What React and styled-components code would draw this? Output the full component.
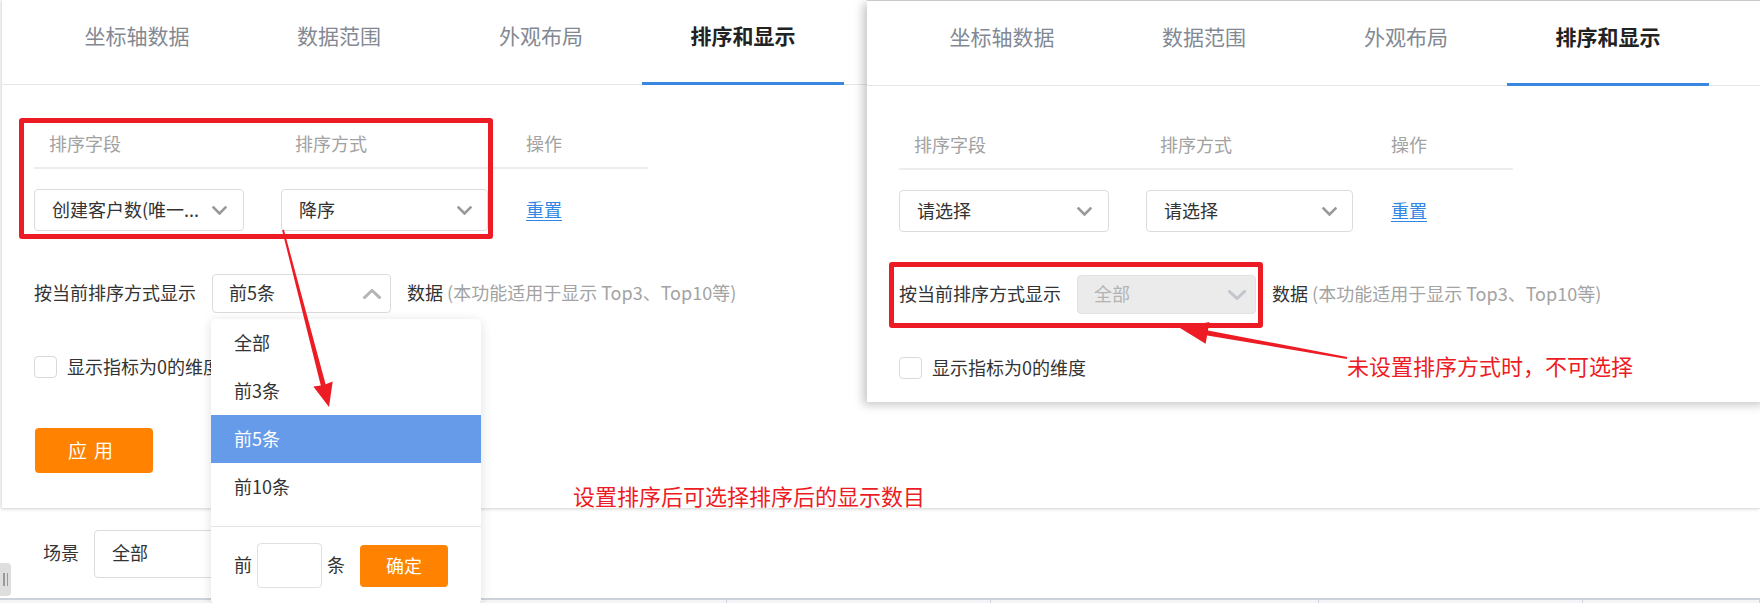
import React from 'react';
import styled, { createGlobalStyle, css } from 'styled-components';

const FONT = `"Noto Sans CJK SC", "Noto Sans", "Liberation Sans", sans-serif`;
const RED = '#ed1c24';
const ORANGE = '#ff8200';

const GlobalStyle = createGlobalStyle`
  html, body { margin: 0; padding: 0; background: #fff; }
  body { font-family: ${FONT}; width: 1760px; height: 603px; overflow: hidden; }
  * { box-sizing: border-box; }
`;

const Page = styled.div`
  position: relative;
  width: 1760px;
  height: 603px;
  overflow: hidden;
  background: #fff;
  display: flex;
  flex-direction: column;
`;

const ConfigPanel = styled.section`
  position: relative;
  z-index: 2;
  flex: 0 0 509px;
  margin-left: 2px;
  background: #fff;
  border-bottom: 1px solid #e3e3e3;
  box-shadow: -2px 0 3px rgba(0, 0, 0, 0.1), 0 1px 3px rgba(0, 0, 0, 0.06);
`;

const Snapshot = styled.section`
  position: absolute;
  z-index: 3;
  left: 867px;
  top: 0;
  width: 900px;
  height: 402px;
  overflow: hidden;
  background: #fff;
  border-top: 1px solid #c9c9c9;
  box-shadow: -4px 3px 9px rgba(0, 0, 0, 0.22);
`;

const TabBar = styled.div`
  display: flex;
  height: 85px;
  padding-left: 34px;
  border-bottom: 1px solid #e6e6e6;
`;

const Tab = styled.div`
  width: 202px;
  height: 85px;
  margin-bottom: -1px;
  display: flex;
  justify-content: center;
  padding-top: 19px;
  font-size: 21px;
  line-height: 32px;
  color: ${(p) => (p.$active ? '#222' : '#838993')};
  font-weight: ${(p) => (p.$active ? 700 : 400)};
  ${(p) =>
    p.$active &&
    css`
      box-shadow: inset 0 -3px 0 #3a87e1;
    `}
`;

const Content = styled.div`
  padding: 37px 0 0 32px;
  display: flex;
  flex-direction: column;
  align-items: flex-start;
`;

const Grid = styled.div`
  display: grid;
  grid-template-columns: 246px 231px 137px;
  width: 614px;
  align-items: center;
`;

const HeadRow = styled(Grid)`
  height: 47px;
  border-bottom: 2px solid #ededed;
`;

const HeadCell = styled.div`
  padding: 0 0 4px 15px;
  font-size: 18px;
  color: #a2a2a2;
`;

const BodyRow = styled(Grid)`
  margin-top: 20px;
  height: 42px;
`;

const Cell = styled.div`
  display: flex;
  align-items: center;
  padding-left: ${(p) => p.$pl || 0}px;
`;

const SelectBox = styled.div`
  display: flex;
  align-items: center;
  justify-content: space-between;
  width: ${(p) => p.$w}px;
  height: ${(p) => p.$h}px;
  padding: 0 ${(p) => p.$pr}px 0 ${(p) => p.$pl}px;
  border: 1px solid ${(p) => (p.$disabled ? '#e2e2e2' : '#dcdcdc')};
  border-radius: 4px;
  background: ${(p) => (p.$disabled ? '#ebebeb' : '#fff')};
  color: ${(p) => (p.$disabled ? '#b3b3b3' : '#333')};
  font-size: 18px;
  white-space: nowrap;
`;

const SelectText = styled.span`
  padding-bottom: 3px;
`;

const Link = styled.a`
  padding-bottom: 3px;
  font-size: 18px;
  color: #2f86e4;
  text-decoration: underline;
  text-underline-offset: 3px;
`;

const DisplayRow = styled.div`
  margin-top: 43px;
  display: flex;
  align-items: center;
  height: 39px;
  font-size: 18px;
  color: #333;
`;

const Label = styled.span`
  padding-bottom: 3px;
  font-size: 18px;
  color: #333;
  white-space: nowrap;
`;

const Hint = styled.span`
  color: #a3a3a3;
`;

const SelectAnchor = styled.div`
  position: relative;
  margin: 0 16px;
`;

const CheckRow = styled.label`
  margin-top: 43px;
  display: flex;
  align-items: center;
  gap: 10px;
  height: 22px;
`;

const CheckBox = styled.span`
  width: 23px;
  height: 22px;
  border: 1px solid #d9d9d9;
  border-radius: 4px;
  background: #fff;
`;

const OrangeButton = styled.button`
  width: ${(p) => p.$w}px;
  height: ${(p) => p.$h}px;
  margin-top: ${(p) => p.$mt || 0}px;
  margin-left: ${(p) => p.$ml || 0}px;
  border: none;
  border-radius: 4px;
  background: ${ORANGE};
  color: #fff;
  font-family: ${FONT};
  font-size: ${(p) => p.$fs || 18}px;
  letter-spacing: ${(p) => p.$ls || 0}px;
  padding: 0 0 2px;
`;

const Menu = styled.div`
  position: absolute;
  top: calc(100% + 6px);
  left: -1px;
  width: 270px;
  background: #fff;
  border-radius: 5px;
  box-shadow: 0 2px 12px rgba(0, 0, 0, 0.13);
  z-index: 5;
`;

const MenuList = styled.ul`
  list-style: none;
  margin: 0;
  padding: 0 0 15px;
`;

const MenuItem = styled.li`
  height: 48px;
  display: flex;
  align-items: center;
  padding: 0 0 3px 23px;
  font-size: 18px;
  color: ${(p) => (p.$active ? '#fff' : '#333')};
  background: ${(p) => (p.$active ? '#659be9' : 'transparent')};
`;

const MenuFooter = styled.div`
  border-top: 1px solid #e4e4e4;
  display: flex;
  align-items: center;
  gap: 5px;
  padding: 16px 0 16px 23px;
`;

const SmallInput = styled.span`
  width: 65px;
  height: 45px;
  border: 1px solid #e0e0e0;
  border-radius: 4px;
`;

const FilterBar = styled.div`
  flex: 0 0 89px;
  display: flex;
  align-items: center;
  gap: 15px;
  padding-left: 43px;
`;

const BottomStrip = styled.div`
  flex: 1;
  display: grid;
  grid-template-columns: 462px 265px 264px 328px 264px 1fr;
  border-top: 2px solid #cdd1d9;
  background: #f4f5f7;
`;

const StripCell = styled.div`
  border-right: 1px solid #d3d6dc;
`;

const Handle = styled.div`
  position: absolute;
  left: 0;
  top: 563px;
  width: 11px;
  height: 33px;
  background: #dedede;
  border-radius: 0 4px 4px 0;
  display: flex;
  justify-content: center;
  align-items: center;
  gap: 2px;
  z-index: 1;
  &::before,
  &::after {
    content: '';
    width: 1.5px;
    height: 13px;
    background: #9a9a9a;
  }
`;

const RedBox = styled.div`
  position: absolute;
  left: ${(p) => p.$x}px;
  top: ${(p) => p.$y}px;
  width: ${(p) => p.$w}px;
  height: ${(p) => p.$h}px;
  border: 5px solid ${RED};
  border-radius: 3px;
  z-index: 6;
`;

const RedNote = styled.div`
  position: absolute;
  left: ${(p) => p.$x}px;
  top: ${(p) => p.$y}px;
  font-size: 22px;
  line-height: 30px;
  color: ${RED};
  white-space: nowrap;
  z-index: 6;
`;

const ArrowLayer = styled.svg`
  position: absolute;
  left: 0;
  top: 0;
  z-index: 6;
  pointer-events: none;
`;

function Chevron({ up = false, w = 15, h = 9, color = '#999', sw = 2.6 }) {
  const pts = up
    ? `1.5,${h - 1.5} ${w / 2},1.5 ${w - 1.5},${h - 1.5}`
    : `1.5,1.5 ${w / 2},${h - 1.5} ${w - 1.5},1.5`;
  return (
    <svg width={w} height={h} viewBox={`0 0 ${w} ${h}`}>
      <polyline points={pts} fill="none" stroke={color} strokeWidth={sw} strokeLinecap="square" />
    </svg>
  );
}

const TABS = ['坐标轴数据', '数据范围', '外观布局', '排序和显示'];

function Tabs() {
  return (
    <TabBar>
      {TABS.map((t, i) => (
        <Tab key={t} $active={i === 3}>
          {t}
        </Tab>
      ))}
    </TabBar>
  );
}

function SortSettings({ field, order, topN, disabled, open, showApply }) {
  return (
    <>
      <Tabs />
      <Content>
        <HeadRow>
          <HeadCell>排序字段</HeadCell>
          <HeadCell>排序方式</HeadCell>
          <HeadCell>操作</HeadCell>
        </HeadRow>
        <BodyRow>
          <Cell>
            <SelectBox $w={210} $h={42} $pl={17} $pr={16}>
              <SelectText>{field}</SelectText>
              <Chevron />
            </SelectBox>
          </Cell>
          <Cell $pl={1}>
            <SelectBox $w={207} $h={42} $pl={17} $pr={15}>
              <SelectText>{order}</SelectText>
              <Chevron />
            </SelectBox>
          </Cell>
          <Cell $pl={15}>
            <Link>重置</Link>
          </Cell>
        </BodyRow>
        <DisplayRow>
          <Label>按当前排序方式显示</Label>
          <SelectAnchor>
            <SelectBox $w={179} $h={39} $pl={16} $pr={9} $disabled={disabled}>
              <SelectText>{topN}</SelectText>
              <Chevron up={open} w={18} h={10} color={disabled ? '#c3c6cc' : '#b5b5b5'} sw={3} />
            </SelectBox>
            {open && (
              <Menu>
                <MenuList>
                  <MenuItem>全部</MenuItem>
                  <MenuItem>前3条</MenuItem>
                  <MenuItem $active>前5条</MenuItem>
                  <MenuItem>前10条</MenuItem>
                </MenuList>
                <MenuFooter>
                  <Label>前</Label>
                  <SmallInput />
                  <Label>条</Label>
                  <OrangeButton $w={88} $h={42} $ml={10}>
                    确定
                  </OrangeButton>
                </MenuFooter>
              </Menu>
            )}
          </SelectAnchor>
          <Label>
            数据 <Hint>(本功能适用于显示 Top3、Top10等)</Hint>
          </Label>
        </DisplayRow>
        <CheckRow>
          <CheckBox />
          <Label>显示指标为0的维度</Label>
        </CheckRow>
        {showApply && (
          <OrangeButton $w={118} $h={45} $mt={50} $ml={1} $ls={7} $fs={19}>
            应用
          </OrangeButton>
        )}
      </Content>
    </>
  );
}

export default function App() {
  return (
    <>
      <GlobalStyle />
      <Page>
        <ConfigPanel>
          <SortSettings field="创建客户数(唯一..." order="降序" topN="前5条" open showApply />
        </ConfigPanel>
        <FilterBar>
          <Label>场景</Label>
          <SelectBox $w={240} $h={48} $pl={17} $pr={16}>
            <SelectText>全部</SelectText>
          </SelectBox>
        </FilterBar>
        <BottomStrip>
          {Array.from({ length: 6 }).map((_, i) => (
            <StripCell key={i} />
          ))}
        </BottomStrip>
        <Handle />

        <Snapshot>
          <SortSettings field="请选择" order="请选择" topN="全部" disabled />
        </Snapshot>

        <RedBox $x={19} $y={118} $w={474} $h={121} />
        <RedBox $x={889} $y={262} $w={374} $h={66} />
        <ArrowLayer width="1760" height="603" viewBox="0 0 1760 603">
          <polygon
            fill={RED}
            points="283.9,229.8 282.1,230.3 320.8,385.4 313.3,386.5 329,407 332.7,381.5 325.6,384.2"
          />
          <polygon
            fill={RED}
            points="1347.2,357 1346.8,359 1207.1,335.4 1205.6,343.7 1180,328 1209.4,322.1 1207.9,330.4"
          />
        </ArrowLayer>
        <RedNote $x={573} $y={480}>
          设置排序后可选择排序后的显示数目
        </RedNote>
        <RedNote $x={1347} $y={350}>
          未设置排序方式时，不可选择
        </RedNote>
      </Page>
    </>
  );
}
